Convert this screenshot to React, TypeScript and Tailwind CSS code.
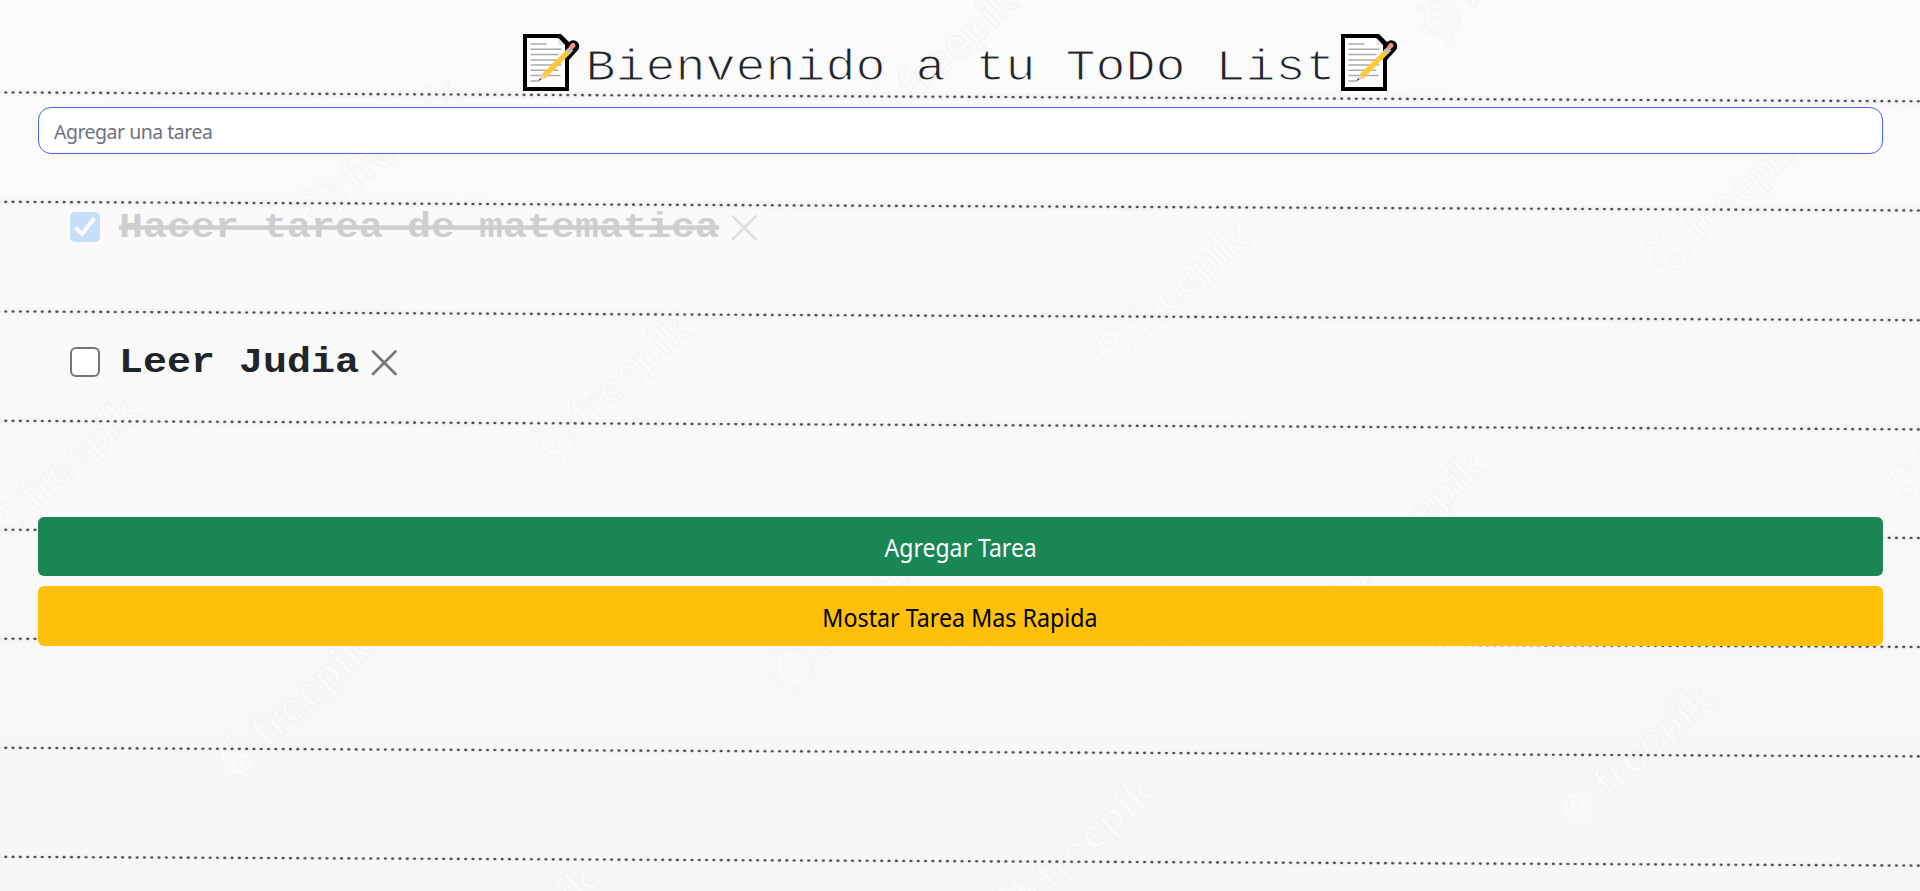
import React from "react";

const RULES = [
  [92.4, 101.3],
  [201.8, 210.5],
  [311.4, 320.2],
  [420.8, 429.4],
  [529.7, 538],
  [638.7, 647],
  [747.8, 756.4],
  [856.8, 865.6],
];

const MARKS = [
  [328, 202], [885, 110], [1442, 18],
  [6, 520], [557, 438], [1115, 346], [1672, 252],
  [238, 757], [794, 667], [1352, 575], [1904, 483],
  [465, 990], [1022, 900], [1580, 808],
];

function Watermark({ x, y }: { x: number; y: number }) {
  return (
    <g transform={`translate(${x} ${y}) rotate(-42)`} fill="#fafafa" stroke="#f3f3f3" strokeWidth="1">
      <circle r="18" />
      <circle cx="-2" cy="-8" r="5" />
      <circle cx="-2" cy="8" r="5" />
      <path d="M6 -17q8 17 0 34M10 -16q8 16 0 32" fill="none" />
      <path d="M-10 -17l-4 -6l5 -2l4 5M2 -19l2 -6l5 1l-1 6M-10 17l-4 6l5 2l4 -5M-18 -4l-5 -2v6l5 1" />
      <text x="27" y="13" fontSize="43" fontWeight="900" fontFamily="Lato, sans-serif" textLength="143" aria-hidden="true">
        freepik
      </text>
    </g>
  );
}

function PaperBackground() {
  return (
    <svg className="absolute inset-0 -z-10 h-full w-full" viewBox="0 0 1920 891" preserveAspectRatio="none" aria-hidden="true">
      <defs>
        <linearGradient id="paper" x1="0" y1="0" x2="0" y2="1">
          <stop offset="0" stopColor="#fbfbfb" />
          <stop offset="1" stopColor="#f7f7f7" />
        </linearGradient>
      </defs>
      <rect width="1920" height="891" fill="url(#paper)" />
      {MARKS.map(([x, y]) => (
        <Watermark key={`${x}-${y}`} x={x} y={y} />
      ))}
      {RULES.map(([a, b]) => (
        <g key={a} fill="none">
          <line x1="0" y1={a} x2="1920" y2={b} stroke="#f6f6f6" strokeWidth="8" />
          <line x1="-2" y1={a} x2="1923" y2={b} stroke="#cfcfcf" strokeWidth="3.2" strokeLinecap="round" strokeDasharray="0.9 6.4" />
          <line x1="-2" y1={a} x2="1923" y2={b} stroke="#505050" strokeWidth="2.1" strokeLinecap="round" strokeDasharray="0.9 6.4" />
        </g>
      ))}
    </svg>
  );
}

function MemoIcon() {
  return (
    <svg className="h-[58px] w-[68px] shrink-0" viewBox="0 0 68 58" aria-hidden="true">
      <path d="M5 0h38l8 8a6 6 0 0 1 8.500 8.500L51 26v31H5z" fill="#000" />
      <path d="M9 4h31l7 7.500v41.500H9z" fill="#fff" />
      <path d="M40.500 4v7h6.500z" fill="#e3e3e3" />
      <path d="M12.500 10h16M12.500 15.300h31M12.500 20.600h28M12.500 26h28M12.500 31h31M12.500 36.300h28M12.500 41.600h30M12.500 47h8" stroke="#aaa" strokeWidth="1.500" />
      <path d="M25.500 42.500L51 17" stroke="#ffc83d" strokeWidth="5.400" />
      <path d="M50 18l3.500-3.500" stroke="#bbb" strokeWidth="5.400" />
      <path d="M54 12.500l1-1" stroke="#f68f86" strokeWidth="5" strokeLinecap="round" />
      <path d="M23.600 40.600l3.800 3.800-6.400 2.600z" fill="#f7d0bd" />
      <path d="M20 47.500l2-3.500 1.500 1.500z" fill="#555" />
    </svg>
  );
}

function Task({ label, done }: { label: string; done?: boolean }) {
  return (
    <li className={done ? "flex h-[135px] items-start opacity-20" : "flex h-[135px] items-start"}>
      {done ? (
        <span role="checkbox" aria-checked="true" className="mt-[10px] size-[30px] shrink-0 rounded-[5px] bg-[#0075ff]">
          <svg viewBox="0 0 30 30" className="size-full" fill="none" stroke="#fff" strokeWidth="4">
            <path d="M5.500 15.500l6.500 6.500L24.500 6" />
          </svg>
        </span>
      ) : (
        <span role="checkbox" aria-checked="false" className="mt-[10px] size-[30px] shrink-0 rounded-[6px] border-2 border-[#767676] bg-white" />
      )}
      <span
        className={
          done
            ? "mt-[2px] ml-[19px] w-[600px] scale-y-[0.88] whitespace-nowrap font-['Liberation_Mono',monospace] text-[40px] leading-[48px] font-bold text-[#212529] line-through decoration-[4.5px]"
            : "mt-[2px] ml-[19px] w-[240px] scale-y-[0.88] whitespace-nowrap font-['Liberation_Mono',monospace] text-[40px] leading-[48px] font-bold text-[#212529]"
        }
      >
        {label}
      </span>
      <button type="button" aria-label="Eliminar" className="mt-[13px] ml-[12px] size-[26px]">
        <svg viewBox="0 0 26 26" className="size-full" stroke="#777" strokeWidth="2.700" strokeLinecap="round">
          <path d="M2 1.500l22.500 22.500M24.500 1.500L2 24" />
        </svg>
      </button>
    </li>
  );
}

export default function App() {
  return (
    <main className="relative isolate h-[891px] overflow-hidden pr-[37px] pl-[38px] font-['Noto_Sans',sans-serif]">
      <PaperBackground />
      <h1 className="flex h-[107px] items-start justify-center pt-[34px]">
        <MemoIcon />
        <span className="mt-[5px] w-[750px] scale-y-[0.88] whitespace-nowrap font-['Liberation_Mono',monospace] text-[50px] leading-[60px] font-normal text-[#212529] [-webkit-text-stroke:1.3px_#fafafa]">
          Bienvenido a tu ToDo List
        </span>
        <MemoIcon />
      </h1>
      <input
        type="text"
        placeholder="Agregar una tarea"
        className="block h-[47px] w-full rounded-[13px] border border-[#4169e1] bg-white px-[15px] pt-[2px] text-[19.5px] tracking-[-0.5px] outline-none placeholder:text-[#6c757d]"
      />
      <ul className="mt-12 h-[315px] pl-8">
        <Task label="Hacer tarea de matematica" done />
        <Task label="Leer Judia" />
      </ul>
      <div className="flex flex-col gap-[10px]">
        <button type="button" className="h-[59px] rounded-[6px] bg-[#198754] pt-[3px] text-[25px] text-white">
          <span className="inline-block scale-x-[0.92]">Agregar Tarea</span>
        </button>
        <button type="button" className="h-[60px] rounded-[6px] bg-[#ffc107] pt-[3px] text-[25px] text-black">
          <span className="inline-block scale-x-[0.93]">Mostar Tarea Mas Rapida</span>
        </button>
      </div>
    </main>
  );
}
